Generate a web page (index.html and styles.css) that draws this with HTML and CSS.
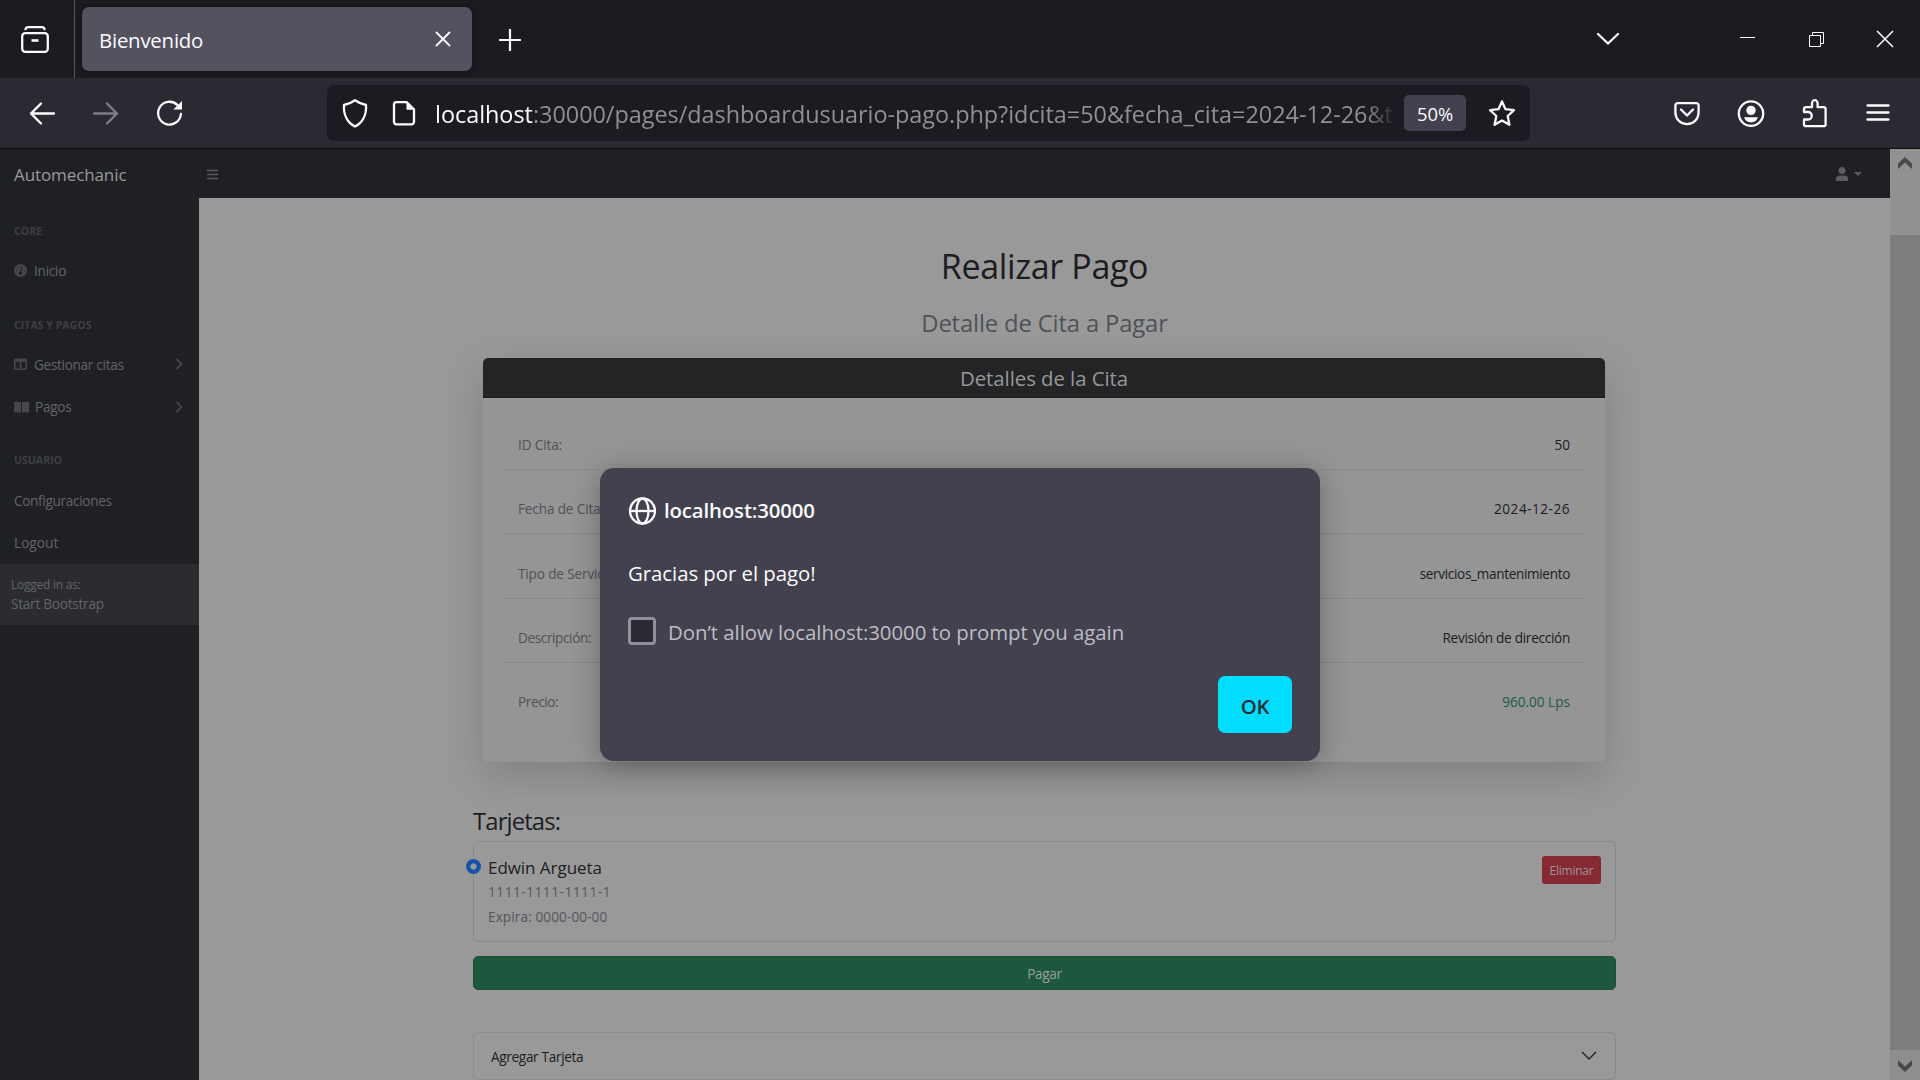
FILE: index.html
```html
<!DOCTYPE html>
<html lang="es">
<head>
<meta charset="utf-8">
<title>Bienvenido</title>
<link rel="stylesheet" href="styles.css">
</head>
<body>
<header class="tabstrip">
  <div class="view-button">
    <svg class="icon" viewBox="0 0 32 32"><rect x="3.2" y="14.2" width="25.6" height="18.600" rx="3"/><path d="M6.500 10.200Q7 8.200 9.200 8.200h13.600Q25 8.200 25.500 10.200" /><path class="thick" d="M12.500 21.500h7"/></svg>
  </div>
  <div class="tab">
    <span class="tab-title">Bienvenido</span>
    <svg class="tab-close" viewBox="0 0 16 16"><path d="M1.500 1.500l13 13M14.500 1.500l-13 13"/></svg>
  </div>
  <svg class="new-tab" viewBox="0 0 22 22"><path d="M11 .8v20.400M.8 11h20.400"/></svg>
  <div class="window-controls">
    <svg class="list-tabs" viewBox="0 0 24 14"><path d="M2 2l10 9.500L22 2"/></svg>
    <svg class="wc" viewBox="0 0 18 18"><path d="M2 7.500h15"/></svg>
    <svg class="wc" viewBox="0 0 18 18"><path d="M2.500 5.500h11v11h-11zM5.500 5.500v-3h11v11h-3"/></svg>
    <svg class="wc" viewBox="0 0 18 18"><path d="M1 1l16 16M17 1L1 17"/></svg>
  </div>
</header>

<div class="toolbar">
  <svg class="icon" viewBox="0 0 32 32"><path d="M28 16.500H5M15 6.500l-10 10 10 10"/></svg>
  <svg class="icon disabled" viewBox="0 0 32 32"><path d="M4 16.500h23M17 6.500l10 10-10 10"/></svg>
  <svg class="icon" viewBox="0 0 32 32"><path d="M26.900 17a11.400 11.400 0 1 1-3.600-9.200"/><path class="solid" d="M28 4v8.600h-8.600z"/></svg>
  <div class="urlbar">
    <svg class="icon" viewBox="0 0 32 32"><path d="M16 3.200c3.500 2.500 7 4 11 4.800.6 9-3 17.500-11 21.500C8 25.500 4.400 17 5 8c4-.8 7.500-2.300 11-4.800z"/></svg>
    <svg class="icon page-icon" viewBox="0 0 32 32"><path d="M8.500 5.200h10.300l7.200 7.200v12.400a2.500 2.500 0 0 1-2.500 2.500h-15A2.500 2.500 0 0 1 6 24.800V7.700a2.500 2.500 0 0 1 2.500-2.500z"/><path class="solid" d="M18.500 5v7.800H26z"/></svg>
    <div class="url"><b>localhost</b>:30000/pages/dashboardusuario-pago.php?idcita=50&amp;fecha_cita=2024-12-26&amp;t</div>
    <span class="zoom">50%</span>
    <svg class="icon" viewBox="0 0 32 32"><path d="M16 4.400l3.500 7.800 8.500 1-6.300 5.800 1.700 8.800-7.400-4.300-7.400 4.300L10.300 19 4 13.200l8.500-1z"/></svg>
  </div>
  <div class="actions">
    <svg class="icon" viewBox="0 0 32 32"><path d="M6.600 6.200h18.800a2.200 2.200 0 0 1 2.200 2.200v7.200a11.600 11.600 0 0 1-23.200 0V8.400a2.200 2.200 0 0 1 2.200-2.200z"/><path d="M10 12.500l6 6 6-6"/></svg>
    <svg class="icon" viewBox="0 0 32 32"><circle cx="16" cy="16.600" r="12.200"/><circle class="solid" cx="16" cy="13.400" r="4.700"/><path class="solid" d="M9 20.200h14q-2 5.200-7 5.200t-7-5.200z"/></svg>
    <svg class="icon" viewBox="0 0 32 32"><path d="M5 15V12.200a2 2 0 0 1 2-2h6V6.500a2.800 3.300 0 0 1 5.600 0v3.700h6a2 2 0 0 1 2 2v15a2 2 0 0 1-2 2H7a2 2 0 0 1-2-2v-4.700h4a3.500 3.500 0 0 0 0-7.500z"/></svg>
    <svg class="icon menu" viewBox="0 0 32 32"><path d="M5.500 8.500h21M5.500 15.500h21M5.500 22.500h21"/></svg>
  </div>
</div>

<div class="viewport">
  <div class="page">
    <nav class="topnav">
      <span class="brand">Automechanic</span>
      <svg class="burger" viewBox="0 0 11 11"><path d="M0 1.500h11M0 5.500h11M0 9.500h11"/></svg>
      <div class="user">
        <svg viewBox="0 0 14 14"><circle cx="7" cy="3.500" r="3.500"/><path d="M.8 14v-1.500A4 4 0 0 1 4.800 8.500h4.400a4 4 0 0 1 4 4V14z"/></svg>
        <i class="caret"></i>
      </div>
    </nav>
    <div class="layout">
      <aside class="sidebar">
        <h6>CORE</h6>
        <a class="inicio"><svg width="13" height="13" viewBox="0 0 13 13"><circle cx="6.500" cy="6.500" r="6.500"/><path class="cut" d="M6.500 9l1.800-6M6.500 2v1.200M3.600 3.300l.8.800M2.200 6.500h1.200M9.700 6.500h1.200"/><circle class="cutfill" cx="6.500" cy="9" r="1.600"/></svg>Inicio</a>
        <h6>CITAS Y PAGOS</h6>
        <a class="gestionar"><svg width="13" height="12" viewBox="0 0 13 12"><path fill-rule="evenodd" d="M1.500.500h10A1.500 1.500 0 0 1 13 2v8.500a1.500 1.500 0 0 1-1.500 1.500h-10A1.500 1.500 0 0 1 0 10.500V2A1.500 1.500 0 0 1 1.500.500zM1.600 3.800v6.600h4.100V3.800zM7.300 3.800v6.600h4.100V3.800z"/></svg>Gestionar citas<svg class="chev" viewBox="0 0 8 12"><path d="M1.500 1l5 5-5 5"/></svg></a>
        <a class="pagos"><svg width="15" height="12" viewBox="0 0 15 12"><path d="M0 1Q4 .2 7 1.300V11.800Q4 10.700 0 11.500zM8 1.300Q11 .2 15 1v10.500Q11 10.700 8 11.800z"/></svg>Pagos<svg class="chev" viewBox="0 0 8 12"><path d="M1.500 1l5 5-5 5"/></svg></a>
        <h6 class="usuario">USUARIO</h6>
        <a class="config">Configuraciones</a>
        <a class="logout">Logout</a>
        <div class="signed"><small>Logged in as:</small><span>Start Bootstrap</span></div>
      </aside>
      <main>
        <h1>Realizar Pago</h1>
        <h3 class="subtitle">Detalle de Cita a Pagar</h3>
        <section class="card">
          <h4>Detalles de la Cita</h4>
          <dl>
            <div><dt>ID Cita:</dt><dd>50</dd></div>
            <div><dt>Fecha de Cita:</dt><dd class="wide">2024-12-26</dd></div>
            <div><dt>Tipo de Servicio:</dt><dd class="tight">servicios_mantenimiento</dd></div>
            <div><dt>Descripción:</dt><dd class="snug">Revisión de dirección</dd></div>
            <div><dt>Precio:</dt><dd class="price">960.00 Lps</dd></div>
          </dl>
        </section>
        <section class="cards">
          <h3 class="list-title">Tarjetas:</h3>
          <div class="card-item">
            <i class="radio"></i>
            <div class="info"><strong>Edwin Argueta</strong><span class="number">1111-1111-1111-1</span><span class="expiry">Expira: 0000-00-00</span></div>
            <button class="delete">Eliminar</button>
          </div>
          <button class="pay">Pagar</button>
          <div class="accordion"><span>Agregar Tarjeta</span><svg viewBox="0 0 16 10"><path d="M1 1l7 7 7-7"/></svg></div>
        </section>
      </main>
    </div>
  </div>
  <div class="scrollbar">
    <div class="scroll-top"><svg viewBox="0 0 14 12"><path d="M7 0l7 6.500V12L7 5.500 0 12V6.500z"/></svg></div>
    <div class="scroll-rest"></div>
    <div class="scroll-end"><svg viewBox="0 0 14 12"><path d="M7 12l7-6.500V0L7 6.500 0 0v5.500z"/></svg></div>
  </div>
</div>

<div class="dialog">
  <div class="origin"><svg viewBox="0 0 28 28"><circle cx="14.500" cy="14" r="12.500"/><ellipse cx="14.500" cy="14" rx="6" ry="12.500"/><path d="M2 14h25"/></svg><span>localhost:30000</span></div>
  <p class="message">Gracias por el pago!</p>
  <label><i class="checkbox"></i><span>Don’t allow localhost:30000 to prompt you again</span></label>
  <button class="ok">OK</button>
</div>
</body>
</html>
```
FILE: styles.css
```css
* { box-sizing: border-box; margin: 0; padding: 0; }

body {
  width: 1920px;
  height: 1080px;
  overflow: hidden;
  position: relative;
  background: #1c1b22;
  font-family: "Open Sans", "Noto Sans", sans-serif;
  white-space: nowrap;
}

h1, h3, h4, strong, b { font-weight: 400; }
button { border: 0; font-family: inherit; }
svg { display: block; flex: none; }

.icon { width: 32px; height: 32px; fill: none; stroke: #fbfbfe; stroke-width: 2.3; stroke-linecap: round; stroke-linejoin: round; overflow: visible; }
.icon .solid { fill: #fbfbfe; stroke: none; }
.icon .thick { stroke-width: 2.6; stroke-linecap: butt; }
.disabled { opacity: .4; }

/* Browser tabs */
.tabstrip { height: 78px; display: flex; align-items: center; background: #1c1b22; }
.view-button { width: 75px; height: 78px; padding: 19px 0 0 19px; border-right: 1px solid #57565c; }
.tab {
  width: 390px; height: 64px; margin-left: 7px; padding: 0 21px 0 17px;
  display: flex; align-items: center; justify-content: space-between;
  background: #54525e; border-radius: 7px; box-shadow: 0 0 6px rgba(0, 0, 0, .5);
}
.tab-title { color: #fbfbfe; font-size: 20.4px; letter-spacing: -.22px; line-height: 28px; padding-top: 2px; }
.tab-close { width: 16px; height: 16px; margin-bottom: 1px; fill: none; stroke: #fbfbfe; stroke-width: 1.8; stroke-linecap: round; }
.new-tab { width: 22px; height: 22px; margin: 2px 0 0 27px; fill: none; stroke: #fbfbfe; stroke-width: 2.2; stroke-linecap: round; }
.window-controls { margin-left: auto; padding-right: 26px; display: flex; align-items: center; }
.window-controls svg { fill: none; stroke: #fff; }
.list-tabs { width: 24px; height: 14px; margin-right: 118px; stroke-width: 2.3; stroke-linecap: round; }
.wc { width: 18px; height: 18px; margin: 0 0 1px 51px; }
.list-tabs + .wc { margin-left: 0; }
.wc:last-child { stroke-width: 1.5; }

/* Navigation toolbar */
.toolbar { height: 71px; padding: 0 26px; display: flex; align-items: center; gap: 32px; background: #2b2a33; border-bottom: 1px solid #0c0c0f; }
.urlbar { width: 1203px; height: 56px; margin-left: 109px; padding: 0 12px; display: flex; align-items: center; background: #1c1b22; border-radius: 7px; }
.page-icon { margin-left: 17px; }
.url {
  width: 958px; margin-left: 15px; padding-top: 2px; overflow: hidden;
  font-size: 23.4px; line-height: 36px; letter-spacing: -.01px; color: #8f8f94;
  -webkit-mask-image: linear-gradient(90deg, #000 930px, transparent 962px);
  mask-image: linear-gradient(90deg, #000 930px, transparent 962px);
}
.url b { color: #fbfbfe; }
.zoom { width: 62px; height: 36px; margin: 0 auto 0 11px; line-height: 36px; text-align: center; background: #42414d; border-radius: 5px; color: #fbfbfe; font-size: 18.4px; padding-top: 1px; }
.actions { margin-left: auto; display: flex; gap: 32px; }
.actions .menu { margin-left: -1px; }

/* Web page */
.viewport { height: 931px; display: flex; }
.page { width: 1890px; display: flex; flex-direction: column; background: #99999a; }
.topnav { height: 49px; display: flex; align-items: center; background: #1f2024; }
.brand { width: 193px; padding: 1px 0 0 14px; color: #9a9a9b; font-size: 17px; letter-spacing: -.1px; }
.burger { width: 11px; height: 11px; margin: 1px 0 0 14px; fill: none; stroke: #58595c; stroke-width: 1.4; }
.user { margin-left: auto; padding-right: 28px; display: flex; align-items: center; gap: 5px; }
.user svg { width: 14px; height: 14px; fill: #5d5d61; }
.caret { border: 4px solid transparent; border-top: 4px solid #5d5d61; border-bottom: 0; }
.layout { flex: 1; min-height: 0; display: flex; }

.sidebar { width: 199px; background: #1f2024; }
.sidebar h6 { height: 51.5px; padding: 25px 14px 0; font-size: 10.6px; line-height: 16px; font-weight: 700; color: #3e3f42; }
.sidebar .usuario { padding-top: 24px; }
.sidebar a { height: 42.3px; padding: 0 14px; display: flex; align-items: center; font-size: 13.6px; letter-spacing: -.25px; color: #636467; }
.sidebar a svg { margin-right: 7px; fill: #46474a; }
.sidebar a .cut { stroke: #1f2024; stroke-width: 1; fill: none; }
.sidebar a .cutfill { fill: #1f2024; }
.sidebar a .chev { width: 8px; height: 12px; margin: 0 2px 0 auto; fill: none; stroke: #46474a; stroke-width: 1.8; }
.sidebar .pagos svg:first-child { margin-right: 6px; }
.sidebar .gestionar { letter-spacing: -.31px; }
.sidebar .config { letter-spacing: -.32px; }
.sidebar .logout { letter-spacing: .05px; }
.signed { height: 61px; padding: 11px 11px 0; display: flex; flex-direction: column; background: #2b2c30; color: #636467; }
.signed small { font-size: 11.9px; line-height: 19.5px; letter-spacing: -.2px; }
.signed span { font-size: 13.6px; line-height: 19.5px; letter-spacing: -.25px; }

main { flex: 1; display: flex; flex-direction: column; align-items: center; color: #1c1d21; }
h1 { margin-top: 47px; font-size: 34px; line-height: 42px; letter-spacing: -.35px; }
.subtitle { margin-top: 21px; font-size: 23.8px; line-height: 30px; letter-spacing: -.14px; color: #4f5257; }
.card { width: 1122px; height: 404px; margin: 20px 1px 0 0; border-radius: 5px 5px 3px 3px; background: #959596; box-shadow: 0 14px 42px rgba(0, 0, 0, .16); }
.card h4 { height: 40px; line-height: 40px; text-align: center; font-size: 20.4px; letter-spacing: -.06px; color: #979798; background: #242426; border-bottom: 1px solid #1c1c1f; border-radius: 5px 5px 0 0; }
.card dl { padding: 7.5px 21px 0; }
.card dl div { height: 64.4px; padding: 29.3px 14px 0; display: flex; justify-content: space-between; border-bottom: 1px solid #88888a; font-size: 13.6px; line-height: 20px; }
.card dl div:last-child { border-bottom: 0; }
.card dt { color: #4f5257; letter-spacing: -.15px; }
.card div:nth-child(4) dt, .card div:nth-child(5) dt { letter-spacing: -.4px; }
.card dd.wide { letter-spacing: .5px; }
.card dd.tight { letter-spacing: -.34px; }
.card dd.snug { letter-spacing: -.29px; }
.card dd.price { color: #1b5a43; }

.cards { width: 1143px; margin-top: 43.5px; display: flex; flex-direction: column; }
.list-title { font-size: 23.8px; line-height: 30px; letter-spacing: -.85px; }
.card-item { height: 101px; margin-top: 5.5px; padding: 13px 14px; position: relative; display: flex; justify-content: space-between; align-items: flex-start; border: 1px solid #89898b; border-radius: 5px; }
.radio { position: absolute; left: -8px; top: 17px; width: 15px; height: 15px; border-radius: 50%; background: radial-gradient(circle, #99999a 2.7px, #1653a8 3.5px); }
.info { display: flex; flex-direction: column; color: #55575c; font-size: 13.6px; line-height: 24.5px; }
.info strong { font-size: 17px; line-height: 25px; letter-spacing: -.05px; color: #1c1d21; }
.number { letter-spacing: .55px; }
.expiry { letter-spacing: .1px; }
.delete { width: 59px; height: 28px; margin-top: 1px; background: #862933; border-radius: 3px; color: #9c9698; font-size: 11.9px; letter-spacing: -.2px; }
.pay { height: 34px; margin-top: 14px; background: #1d573d; border: 1px solid #1b4f38; border-radius: 5px; color: #98a09c; font-size: 13.6px; letter-spacing: -.3px; padding-top: 1px; }
.accordion { height: 48px; margin-top: 42px; padding: 1px 18px 0 17px; display: flex; align-items: center; justify-content: space-between; border: 1px solid #8b8b8d; border-radius: 5px; font-size: 13.6px; letter-spacing: -.33px; }
.accordion svg { width: 16px; height: 10px; margin-top: -1px; fill: none; stroke: #1c1d21; stroke-width: 1.3; }

.scrollbar { width: 30px; display: flex; flex-direction: column; }
.scrollbar svg { width: 14px; height: 12px; fill: #4a4a4c; }
.scroll-top { height: 86px; padding: 8px; background: #919192; }
.scroll-rest { flex: 1; background: #7d7d7f; }
.scroll-end { height: 30px; padding: 10px 8px; background: #8e8e90; }

/* Alert dialog */
.dialog {
  position: absolute; left: 600px; top: 468px; width: 720px; height: 293px; padding: 29px 28px 28px;
  display: flex; flex-direction: column; background: #42414d; border-radius: 14px;
  box-shadow: 0 4px 28px rgba(0, 0, 0, .3); color: #fbfbfe; font-size: 20.4px; line-height: 28px;
}
.origin { display: flex; gap: 8px; font-weight: 600; letter-spacing: -.15px; }
.origin span { margin-top: -1px; }
.origin svg { width: 28px; height: 28px; fill: none; stroke: #fbfbfe; stroke-width: 2.3; }
.message { margin-top: 34px; letter-spacing: -.05px; }
.dialog label { margin-top: 30px; display: flex; gap: 12px; color: #bdbdc4; letter-spacing: -.05px; }
.dialog label span { padding-top: 1px; }
.checkbox { width: 28px; height: 28px; border: 3px solid #8f8f9d; border-radius: 4px; background: #2b2a33; }
.ok { width: 74px; height: 57px; margin: auto 0 0 auto; padding-top: 2px; background: #00ddff; border-radius: 7px; color: #2b2a33; font-size: 20.4px; font-weight: 600; letter-spacing: -.3px; }
```
